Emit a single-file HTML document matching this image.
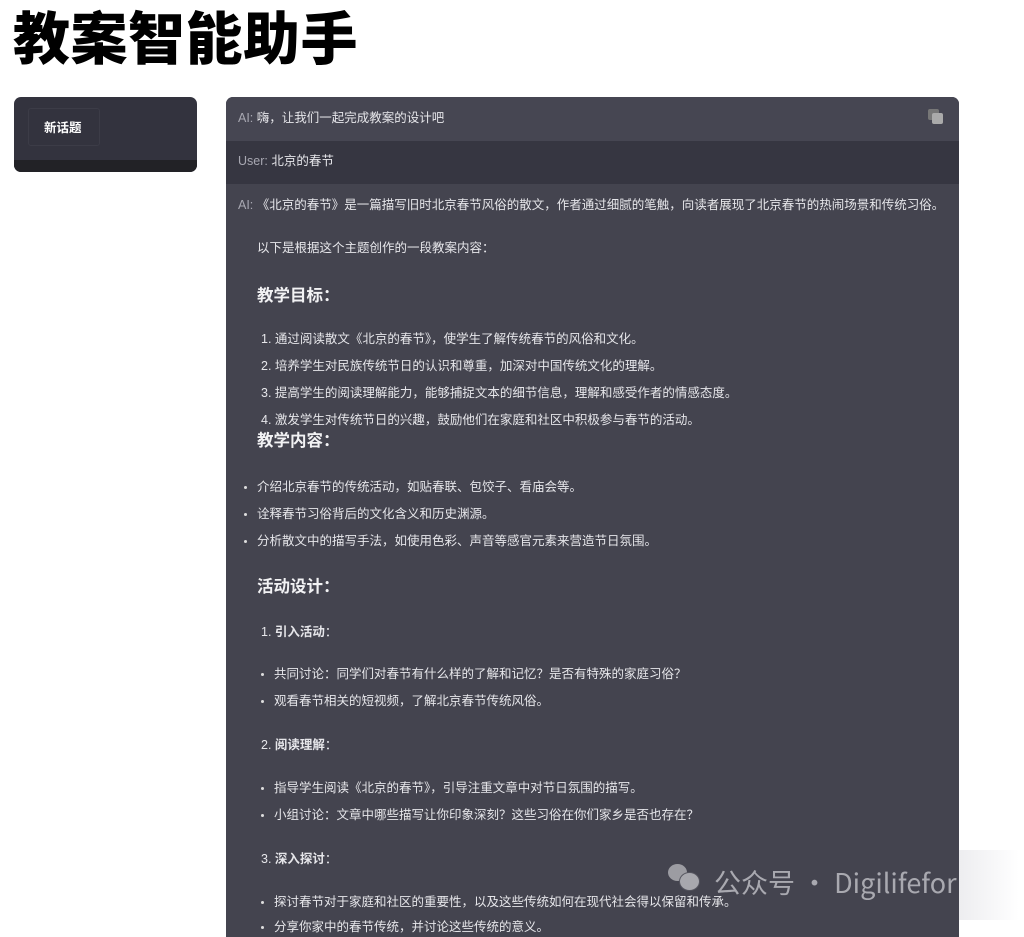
<!DOCTYPE html>
<html><head><meta charset="utf-8"><style>
body{margin:0;width:1024px;height:924px;overflow:hidden;background:#fff;font-family:"Liberation Sans","Noto Sans CJK SC",sans-serif;position:relative}
.t{position:absolute;white-space:nowrap;color:#e6e6ea;font-size:12.5px;line-height:18px}
.h{font-size:16.5px;font-weight:bold;color:#f2f2f4;line-height:22px}
.b{font-weight:bold}
.g{color:#a8a8b2}
.dot::before{content:"";position:absolute;left:-13px;top:8px;width:3px;height:3px;background:#ddd;border-radius:50%}
</style></head><body>
<div style="position:absolute;left:13px;top:0;font-size:57px;font-weight:900;line-height:70px;color:#000;letter-spacing:0.5px;font-family:'Noto Sans CJK SC',sans-serif">教案智能助手</div>
<div style="position:absolute;left:14px;top:97px;width:183px;height:75px;background:#33333e;border-radius:7px;overflow:hidden">
 <div style="position:absolute;left:0;bottom:0;width:100%;height:12px;background:#222226"></div>
 <div style="position:absolute;left:14px;top:11px;width:72px;height:38px;border:1px solid #3c3c47;border-radius:3px;box-sizing:border-box"></div>
 <div style="position:absolute;left:30px;top:22px;color:#fff;font-size:12.5px;font-weight:bold;line-height:18px">新话题</div>
</div>
<div style="position:absolute;left:226px;top:97px;width:733px;height:840px;background:#44444f;border-radius:7px 7px 0 0;overflow:hidden">
 <div style="position:absolute;left:0;top:0;width:100%;height:44px;background:#464652"></div>
 <div style="position:absolute;left:0;top:44px;width:100%;height:43px;background:#363641"></div>
 <div style="position:absolute;left:702px;top:12px;width:11px;height:11px;background:#777;border-radius:2px"></div>
 <div style="position:absolute;left:706px;top:16px;width:11px;height:11px;background:#aaa;border-radius:2px"></div>
</div>
<div class="t" style="left:238px;top:109px"><span class="g">AI:</span> 嗨，让我们一起完成教案的设计吧</div>
<div class="t" style="left:238px;top:152px"><span class="g">User:</span> 北京的春节</div>
<div class="t" style="left:238px;top:196px"><span class="g">AI:</span> 《北京的春节》是一篇描写旧时北京春节风俗的散文，作者通过细腻的笔触，向读者展现了北京春节的热闹场景和传统习俗。</div>
<div class="t" style="left:257px;top:239px">以下是根据这个主题创作的一段教案内容：</div>
<div class="t h" style="left:257px;top:285px">教学目标：</div>
<div class="t" style="left:261px;top:330px">1. 通过阅读散文《北京的春节》，使学生了解传统春节的风俗和文化。</div>
<div class="t" style="left:261px;top:357px">2. 培养学生对民族传统节日的认识和尊重，加深对中国传统文化的理解。</div>
<div class="t" style="left:261px;top:384px">3. 提高学生的阅读理解能力，能够捕捉文本的细节信息，理解和感受作者的情感态度。</div>
<div class="t" style="left:261px;top:411px">4. 激发学生对传统节日的兴趣，鼓励他们在家庭和社区中积极参与春节的活动。</div>
<div class="t h" style="left:257px;top:430px">教学内容：</div>
<div class="t dot" style="left:257px;top:478px">介绍北京春节的传统活动，如贴春联、包饺子、看庙会等。</div>
<div class="t dot" style="left:257px;top:505px">诠释春节习俗背后的文化含义和历史渊源。</div>
<div class="t dot" style="left:257px;top:532px">分析散文中的描写手法，如使用色彩、声音等感官元素来营造节日氛围。</div>
<div class="t h" style="left:257px;top:576px">活动设计：</div>
<div class="t" style="left:261px;top:623px">1. <span class="b">引入活动</span>：</div>
<div class="t dot" style="left:274px;top:665px">共同讨论：同学们对春节有什么样的了解和记忆？是否有特殊的家庭习俗？</div>
<div class="t dot" style="left:274px;top:692px">观看春节相关的短视频，了解北京春节传统风俗。</div>
<div class="t" style="left:261px;top:736px">2. <span class="b">阅读理解</span>：</div>
<div class="t dot" style="left:274px;top:779px">指导学生阅读《北京的春节》，引导注重文章中对节日氛围的描写。</div>
<div class="t dot" style="left:274px;top:806px">小组讨论：文章中哪些描写让你印象深刻？这些习俗在你们家乡是否也存在？</div>
<div class="t" style="left:261px;top:850px">3. <span class="b">深入探讨</span>：</div>
<div class="t dot" style="left:274px;top:893px">探讨春节对于家庭和社区的重要性，以及这些传统如何在现代社会得以保留和传承。</div>
<div class="t dot" style="left:274px;top:918px">分享你家中的春节传统，并讨论这些传统的意义。</div>
<div style="position:absolute;left:668px;top:864px;width:19px;height:17px;background:#9c9ca2;border-radius:50%"></div>
<div style="position:absolute;left:679px;top:872px;width:19px;height:17px;background:#a8a8ae;border-radius:50%;border:1px solid #55555f"></div>
<div style="position:absolute;left:714px;top:864px;font-size:27px;line-height:36px;color:#a9a9b0;white-space:nowrap;font-family:'Noto Sans CJK SC',sans-serif">公众号 · Digilifefor</div>
<div style="position:absolute;left:959px;top:850px;width:60px;height:70px;background:linear-gradient(90deg,rgba(235,235,238,0.9),rgba(255,255,255,0))"></div>
</body></html>
